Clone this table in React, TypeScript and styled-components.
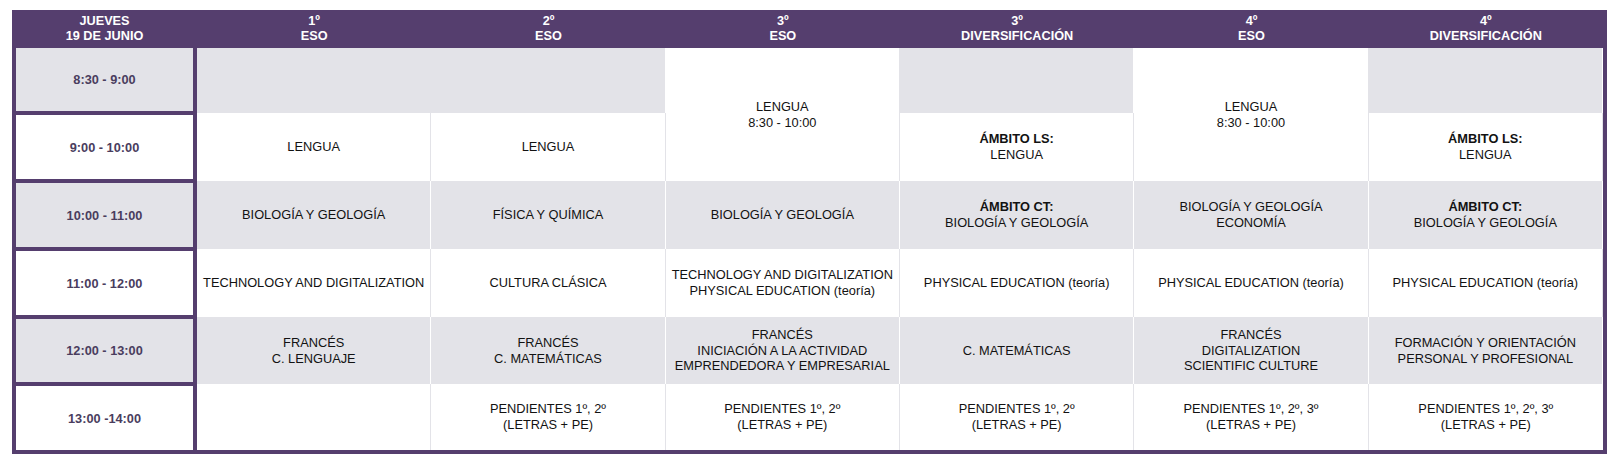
import React from 'react';
import styled, { createGlobalStyle } from 'styled-components';

const PURPLE = '#553e6e';
const GRAY = '#e3e3e8';

const GlobalStyle = createGlobalStyle`
  body {
    margin: 0;
    background: #ffffff;
    font-family: "Liberation Sans", Arial, sans-serif;
  }
`;

const Page = styled.div`
  padding: 10px 0 0 12px;
`;

const Schedule = styled.div`
  width: 1595px;
`;

const HeaderRow = styled.div`
  display: grid;
  grid-template-columns: 185px repeat(6, 1fr);
  padding-right: 4px;
  height: 38px;
  background: ${PURPLE};
`;

const HeaderCell = styled.div`
  display: flex;
  flex-direction: column;
  align-items: center;
  justify-content: center;
  color: #ffffff;
  font-weight: 700;
  font-size: 12.7px;
  line-height: 15px;
  text-align: center;
`;

const Body = styled.div`
  display: grid;
  grid-template-columns: 181px repeat(6, 1fr);
  grid-template-rows: 65px 68px 68px 68px 67px 66px;
  border: 4px solid ${PURPLE};
  border-top: 0;
`;

const TimeCell = styled.div<{ $shade: boolean; $first: boolean; $last: boolean }>`
  display: flex;
  align-items: center;
  justify-content: center;
  background: ${(p) => (p.$shade ? GRAY : '#ffffff')};
  border-right: 4px solid ${PURPLE};
  border-top: ${(p) => (p.$first ? 0 : 2)}px solid ${PURPLE};
  border-bottom: ${(p) => (p.$last ? 0 : 2)}px solid ${PURPLE};
  color: #4a3d5e;
  font-weight: 700;
  font-size: 12.75px;
`;

const Cell = styled.div<{ $shade: boolean; $cols?: number; $rows?: number }>`
  display: flex;
  flex-direction: column;
  align-items: center;
  justify-content: center;
  grid-column: span ${(p) => p.$cols || 1};
  grid-row: span ${(p) => p.$rows || 1};
  background: ${(p) => (p.$shade ? GRAY : '#ffffff')};
  border-right: 1px solid ${(p) => (p.$shade ? '#ffffff' : GRAY)};
  color: #121212;
  font-size: 12.8px;
  line-height: 15.8px;
  text-align: center;
  &:last-child {
    border-right: 0;
  }
`;

const Strong = styled.span`
  font-weight: 700;
`;

type Entry = {
  lines?: string[];
  title?: string;
  cols?: number;
  rows?: number;
};

const headers = [
  ['JUEVES', '19 DE JUNIO'],
  ['1º', 'ESO'],
  ['2º', 'ESO'],
  ['3º', 'ESO'],
  ['3º', 'DIVERSIFICACIÓN'],
  ['4º', 'ESO'],
  ['4º', 'DIVERSIFICACIÓN'],
];

const times = ['8:30 - 9:00', '9:00 - 10:00', '10:00 - 11:00', '11:00 - 12:00', '12:00 - 13:00', '13:00 -14:00'];

const pend2 = { lines: ['PENDIENTES 1º, 2º', '(LETRAS + PE)'] };
const pend3 = { lines: ['PENDIENTES 1º, 2º, 3º', '(LETRAS + PE)'] };
const pe = { lines: ['PHYSICAL EDUCATION (teoría)'] };

const rows: Entry[][] = [
  [
    { cols: 2 },
    { lines: ['LENGUA', '8:30 - 10:00'], rows: 2 },
    {},
    { lines: ['LENGUA', '8:30 - 10:00'], rows: 2 },
    {},
  ],
  [
    { lines: ['LENGUA'] },
    { lines: ['LENGUA'] },
    { title: 'ÁMBITO LS:', lines: ['LENGUA'] },
    { title: 'ÁMBITO LS:', lines: ['LENGUA'] },
  ],
  [
    { lines: ['BIOLOGÍA Y GEOLOGÍA'] },
    { lines: ['FÍSICA Y QUÍMICA'] },
    { lines: ['BIOLOGÍA Y GEOLOGÍA'] },
    { title: 'ÁMBITO CT:', lines: ['BIOLOGÍA Y GEOLOGÍA'] },
    { lines: ['BIOLOGÍA Y GEOLOGÍA', 'ECONOMÍA'] },
    { title: 'ÁMBITO CT:', lines: ['BIOLOGÍA Y GEOLOGÍA'] },
  ],
  [
    { lines: ['TECHNOLOGY AND DIGITALIZATION'] },
    { lines: ['CULTURA CLÁSICA'] },
    { lines: ['TECHNOLOGY AND DIGITALIZATION', 'PHYSICAL EDUCATION (teoría)'] },
    pe,
    pe,
    pe,
  ],
  [
    { lines: ['FRANCÉS', 'C. LENGUAJE'] },
    { lines: ['FRANCÉS', 'C. MATEMÁTICAS'] },
    { lines: ['FRANCÉS', 'INICIACIÓN A LA ACTIVIDAD', 'EMPRENDEDORA Y EMPRESARIAL'] },
    { lines: ['C. MATEMÁTICAS'] },
    { lines: ['FRANCÉS', 'DIGITALIZATION', 'SCIENTIFIC CULTURE'] },
    { lines: ['FORMACIÓN Y ORIENTACIÓN', 'PERSONAL Y PROFESIONAL'] },
  ],
  [{}, pend2, pend2, pend2, pend3, pend3],
];

export default function App() {
  return (
    <Page>
      <GlobalStyle />
      <Schedule>
        <HeaderRow>
          {headers.map((h, i) => (
            <HeaderCell key={i}>
              <span>{h[0]}</span>
              <span>{h[1]}</span>
            </HeaderCell>
          ))}
        </HeaderRow>
        <Body>
          {rows.map((row, r) => {
            const shade = r % 2 === 0;
            return (
              <React.Fragment key={r}>
                <TimeCell $shade={shade} $first={r === 0} $last={r === rows.length - 1}>
                  {times[r]}
                </TimeCell>
                {row.map((e, c) => {
                  const span = e.rows || 1;
                  // merged cells over two rows are white
                  const cellShade = span > 1 ? false : shade;
                  return (
                    <Cell key={c} $shade={cellShade} $cols={e.cols} $rows={e.rows}>
                      {e.title && <Strong>{e.title}</Strong>}
                      {(e.lines || []).map((l, k) => (
                        <span key={k}>{l}</span>
                      ))}
                    </Cell>
                  );
                })}
              </React.Fragment>
            );
          })}
        </Body>
      </Schedule>
    </Page>
  );
}
